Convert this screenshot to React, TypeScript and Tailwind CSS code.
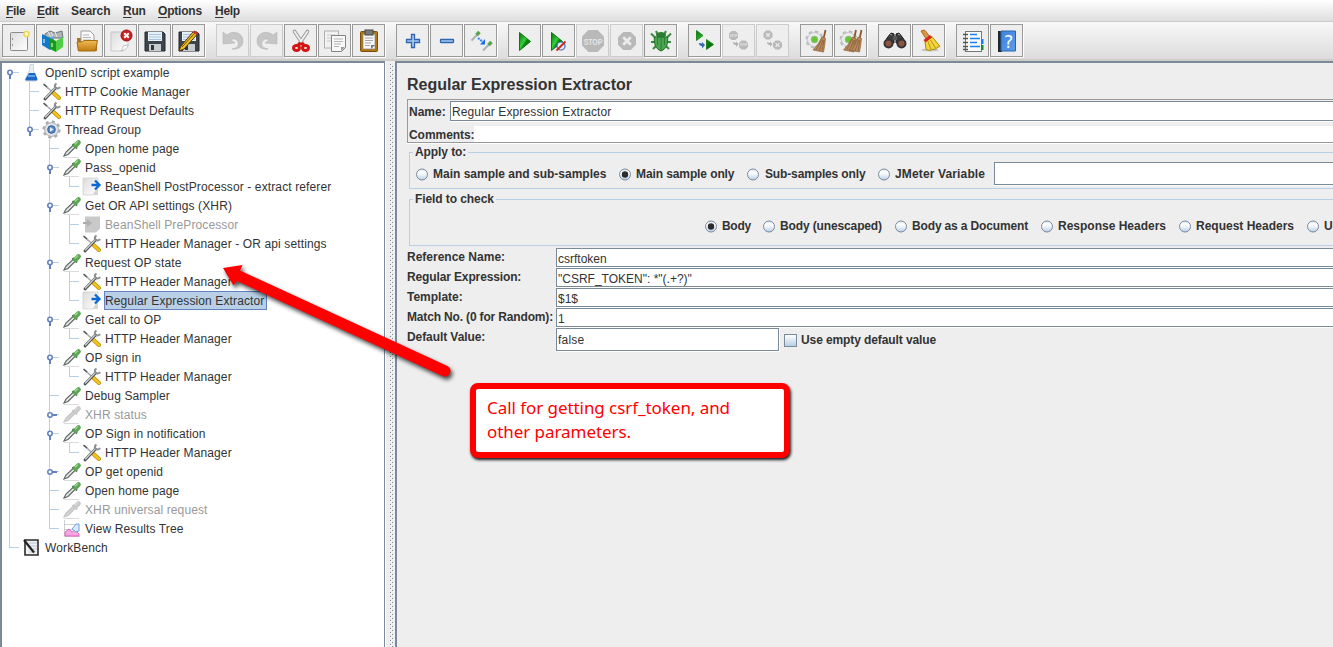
import React from "react";

type P = { children?: React.ReactNode };

const Svg = ({ children }: P) => (
  <svg width="24" height="24" viewBox="0 0 24 24" className="shrink-0">{children}</svg>
);

const Defs = () => (
  <svg width="0" height="0" className="absolute">
    <defs>
      <linearGradient id="play" x1="0" y1="0" x2="1" y2="1">
        <stop offset="0" stopColor="#0b6b0b" /><stop offset=".45" stopColor="#35d23a" /><stop offset=".55" stopColor="#0c8a10" /><stop offset="1" stopColor="#065c08" />
      </linearGradient>
      <linearGradient id="paper" x1="0" y1="0" x2="1" y2="1">
        <stop offset="0" stopColor="#dcdcdc" /><stop offset="1" stopColor="#ffffff" />
      </linearGradient>
      <linearGradient id="gold" x1="0" y1="0" x2="0" y2="1">
        <stop offset="0" stopColor="#f0bd55" /><stop offset="1" stopColor="#c07a10" />
      </linearGradient>
      <linearGradient id="radio" x1="0" y1="0" x2="0" y2="1">
        <stop offset="0" stopColor="#dfe9f3" /><stop offset=".35" stopColor="#ffffff" /><stop offset="1" stopColor="#b8cfe5" />
      </linearGradient>
      <linearGradient id="book" x1="0" y1="0" x2="1" y2="1">
        <stop offset="0" stopColor="#3f83dc" /><stop offset="1" stopColor="#5d9cec" />
      </linearGradient>
      <pattern id="grip" width="4" height="4" patternUnits="userSpaceOnUse">
        <path d="M0 0h1v1h-1zM2 2h1v1h-1z" fill="#7a8a99" />
        <path d="M1 1h1v1h-1zM3 3h1v1h-1z" fill="#ffffff" />
      </pattern>
    </defs>
  </svg>
);

const Floppy = () => (
  <>
    <path d="M2 3h18l2 2v17H2z" fill="#3d444b" stroke="#22272c" />
    <rect x="5" y="3" width="14" height="9" fill="#e9f1f8" />
    <path d="M6 5.5h12M6 8h12M6 10.5h12" stroke="#a9c4dc" strokeWidth="1" />
    <rect x="6" y="15" width="12" height="7" fill="#c9ccce" />
    <rect x="8" y="16" width="3" height="5" fill="#2f353a" />
  </>
);
const Gear = () => (
  <>
    <circle cx="9.500" cy="10.500" r="7.500" fill="none" stroke="#b9bcbd" strokeWidth="3" strokeDasharray="3.400 2.490" />
    <circle cx="9.500" cy="10.500" r="7" fill="#eceeee" stroke="#c3c6c7" />
    <circle cx="9.500" cy="10.500" r="3.400" fill="#64c832" stroke="#a9b5a9" />
  </>
);
const Broom = () => (
  <>
    <path d="M20.500 1l-2 9" stroke="#8a5a2c" strokeWidth="1.800" />
    <path d="M17 8l3.500 1.500-1 8L18.500 23 8 21l5-6z" fill="#b98a5e" stroke="#8d6238" strokeWidth=".7" />
    <path d="M17 10l-6 11M18 11l-4 11M19 11l-2 11" stroke="#7a5430" strokeWidth=".6" />
  </>
);
const Stop = ({ x, y, r, label }: { x: number; y: number; r: number; label: string }) => {
  const k = r * 0.42;
  return (
    <>
      <path d={`M${x - k} ${y - r}H${x + k}L${x + r} ${y - k}V${y + k}L${x + k} ${y + r}H${x - k}L${x - r} ${y + k}V${y - k}z`} fill="#b9b9b9" />
      {label === "STOP" ? (
        <text x={x} y={y + r * 0.32} textAnchor="middle" fontSize={r * 0.85} textLength={r * 1.7} lengthAdjust="spacingAndGlyphs" fontWeight="bold" fontFamily="Liberation Sans, sans-serif" fill="#e6e6e6">STOP</text>
      ) : (
        <path d={`M${x - k} ${y - k}l${2 * k} ${2 * k}m0 ${-2 * k}l${-2 * k} ${2 * k}`} stroke="#ececec" strokeWidth={r * 0.3} />
      )}
    </>
  );
};

const I: Record<string, React.ReactNode> = {
  new: <><rect x="3.500" y="3.500" width="17" height="18" rx="1" fill="url(#paper)" stroke="#8b8b8b" /><path d="M5.500 9v2M5.500 15v2" stroke="#999" /><circle cx="19.500" cy="5" r="2.500" fill="#fffbd0" stroke="#ecd75c" strokeWidth="1.600" /></>,
  templates: <>
    <path d="M4 5l5-3 5 2 7-2 1 7H4z" fill="#aeb4b8" stroke="#6d757b" /><path d="M7 3l3 5M14 3l2 5M10 3l2 4" stroke="#e8e8e8" />
    <path d="M1 5l8 4v12l-8-5z" fill="#1577c8" /><path d="M9 9l4-2v12l-4 2z" fill="#4eaef0" />
    <path d="M9 9l6 3v11l-6-3z" fill="#189a1d" /><path d="M15 12l7-4v10l-7 5z" fill="#4fd044" /><path d="M3 10v4M11 14v4" stroke="#fff" /></>,
  open: <><path d="M2 9h6l1 3H22v10H3z" fill="#a8741c" /><path d="M6 2h9l4 4v9H6z" fill="#fafafa" stroke="#9a9a9a" /><path d="M8 6h6M8 8.500h8M8 11h8" stroke="#b5b5b5" /><path d="M2 13h5l2-1.500H22.500l-2 10.500H3.500z" fill="url(#gold)" stroke="#a76d12" /></>,
  close: <><path d="M2 3h17v14l-5 5H2z" fill="url(#paper)" stroke="#c9c9c9" /><path d="M12 22c2-2 2-4 2-5l5-1c0 2-2 5-7 6z" fill="#fff" stroke="#aaa" strokeWidth=".7" /><circle cx="17.500" cy="6.500" r="5.500" fill="#cf1f1f" stroke="#8f0f0f" /><path d="M15.200 4.200l4.600 4.600m0-4.600l-4.600 4.600" stroke="#fff" strokeWidth="2" /></>,
  save: <Floppy />,
  saveas: <><Floppy /><path d="M2 22l2-5L16 3l4 2.500L7 20z" fill="#f1bd24" stroke="#4a3710" /><path d="M15.500 3.500l2-2 4 2.500-1.500 2z" fill="#c33" /><path d="M5 18L17.500 4.500" stroke="#6d5310" /></>,
  undo: <path d="M2 3l4 3C11 1 22 3 22 12c0 5-4 9-11 8 5-1 7-3 6-7-1-3-5-4-7-2l4 3-12 1z" fill="#c6c6c6" stroke="#b7b7b7" strokeWidth=".6" />,
  redo: <path d="M22 3l-4 3C13 1 2 3 2 12c0 5 4 9 11 8-5-1-7-3-6-7 1-3 5-4 7-2l-4 3 12 1z" fill="#c6c6c6" stroke="#b7b7b7" strokeWidth=".6" />,
  cut: <><path d="M5.500 2.500l8 12M18.500 2.500l-8 12" stroke="#8c8f90" strokeWidth="3.600" strokeLinecap="round" /><path d="M5.500 2.500l8 12M18.500 2.500l-8 12" stroke="#eeefef" strokeWidth="2" strokeLinecap="round" /><path d="M12 14l4 3M12 14l-4 3" stroke="#d41313" strokeWidth="3.400" /><ellipse cx="7.500" cy="19" rx="3" ry="2.600" fill="none" stroke="#d41313" strokeWidth="3" /><ellipse cx="16.500" cy="19" rx="3" ry="2.600" fill="none" stroke="#d41313" strokeWidth="3" /></>,
  copy: <><rect x="1.500" y="2" width="14" height="17" fill="#f1f1f1" stroke="#b0b0b0" /><path d="M4 6h8M4 9h8M4 12h8" stroke="#c9c9c9" /><path d="M8.500 6.500h14v12l-4 4h-10z" fill="#f8f8f8" stroke="#838383" /><path d="M11 10h9M11 12.500h9M11 15h7M11 17.500h5" stroke="#b5b5b5" /><path d="M18 22v-4h4z" fill="#999" /></>,
  paste: <><rect x="3.500" y="2.500" width="17" height="20" rx="1" fill="#b5750e" stroke="#7c4f09" /><path d="M6 5h12v15H6z" fill="#f7f7f7" stroke="#888" strokeWidth=".7" /><rect x="8" y="1" width="8" height="5" fill="#777b77" stroke="#444" /><path d="M8 9h8M8 11.500h8M8 14h6M8 16.500h5" stroke="#a9a9a9" /><path d="M14 20v-4h4z" fill="#777" /></>,
  plus: <path d="M10.500 5.500h3v5h5v3h-5v5h-3v-5h-5v-3h5z" fill="#a9c9ef" stroke="#2f66b2" strokeWidth="1.300" />,
  minus: <rect x="5.500" y="10.500" width="13" height="3" rx=".5" fill="#a9c9ef" stroke="#2f66b2" strokeWidth="1.300" />,
  toggle: <><path d="M2.500 11.500l6-6" stroke="#a9b2ad" strokeWidth="2" /><path d="M7.500 6l3-3" stroke="#5aa54c" strokeWidth="3.600" /><path d="M14 21.500l6-6" stroke="#a9b2ad" strokeWidth="2" /><path d="M19.500 16l3-3" stroke="#5aa54c" strokeWidth="3.600" /><path d="M9 9l5 4" stroke="#2b86f5" strokeWidth="2" strokeDasharray="2 1" /><path d="M11 15.500h5v-5.500z" fill="#176ee0" /></>,
  play: <path d="M6.500 3.500v18l11-9z" fill="url(#play)" stroke="#0a780e" />,
  playnp: <><path d="M4.500 3.500v18l11-9z" fill="url(#play)" stroke="#0a780e" /><circle cx="14" cy="17" r="4" fill="#e8f0fa" stroke="#3b6db5" strokeWidth="1.200" /><path d="M9.500 21.500l9-9" stroke="#d12222" strokeWidth="1.800" /></>,
  stop: <Stop x={12} y={12} r={11} label="STOP" />,
  shut: <Stop x={12} y={12} r={9} label="x" />,
  bug: <><path d="M7 2l2 4M17 2l-2 4M2 4.500l5 5M22 4.500l-5 5M2 13h5M22 13h-5M4 20l4-4M20 20l-4-4" stroke="#3a8a3e" strokeWidth="2" /><ellipse cx="12" cy="6" rx="5" ry="3" fill="#2c7d32" /><path d="M5.500 8h13c1 6-1 12-6.500 14-5.500-2-7.500-8-6.500-14z" fill="#49a550" stroke="#236b2a" /><path d="M12 8v14M8.500 9v7M15.500 9v7" stroke="#2f7f36" /></>,
  rstart: <><path d="M3.500 1.500v10l6.500-5zM13.500 10.500v10l7-5z" fill="url(#play)" stroke="#0a780e" strokeWidth=".8" /><path d="M6 14c0 2 1 3 3 3v2.500l3-3.500-3-3v1.500z" fill="#3666b5" /></>,
  rstop: <><Stop x={6.500} y={6.500} r={4.500} label="STOP" /><Stop x={16.500} y={16} r={4.500} label="STOP" /><path d="M6 13c0 2 1 3 3 3v2l2.500-3-2.500-2.500v1.500z" fill="#b0b0b0" /></>,
  rshut: <><Stop x={7} y={6} r={4.500} label="x" /><Stop x={16.500} y={16} r={4.500} label="x" /><path d="M6 13c0 2 1 3 3 3v2l2.500-3-2.500-2.500v1.500z" fill="#b0b0b0" /></>,
  clear: <><Gear /><Broom /></>,
  clearall: <><Gear /><g transform="translate(-3.500 0)"><Broom /></g><g transform="translate(2 0)"><Broom /></g></>,
  find: <><path d="M4 9l4-5 3 1v9H2zM20 9l-4-5-3 1v9h9z" fill="#3c3c3c" stroke="#1d1d1d" /><rect x="10" y="7" width="4" height="4" fill="#555" /><circle cx="5.500" cy="14.500" r="4" fill="#8a5640" stroke="#333" strokeWidth="2" /><circle cx="18.500" cy="14.500" r="4" fill="#8a5640" stroke="#333" strokeWidth="2" /><path d="M7 5l2 1M15 5l2 1" stroke="#aaa" /></>,
  reset: <><ellipse cx="13" cy="21" rx="9" ry="1.500" fill="#c4c4c4" /><path d="M4 2l3-1 1.500 1L13 8l-3.500 2.500z" fill="#d99a45" stroke="#a86a20" /><path d="M8 12.500l7-5 8 10-3 1-1 1.500-4 .5-2 1-4-1z" fill="#f3d43b" stroke="#ae8d0d" /><path d="M11 12.500l3 8M13.500 11l5 8" stroke="#b4951c" /><path d="M6.500 11l6.500-5 2 2.500-6.500 5z" fill="#d5271c" /></>,
  func: <><rect x="4.500" y="2.500" width="16" height="20" fill="#fafafa" stroke="#777" /><path d="M9 5.500h7M9 9.500h10M9 13.500h7M9 17.500h10" stroke="#1681f3" strokeWidth="1.500" /><path d="M2 5.500h5M2 9.500h5M2 13.500h5M2 17.500h5M2 20.500h5" stroke="#555" strokeWidth="1.500" /><rect x="20" y="10" width="2.500" height="5" fill="#1681f3" /><rect x="20" y="16" width="2.500" height="5" fill="#189022" /></>,
  help: <><path d="M3 2h4v21H3z" fill="#23282f" /><path d="M6 2h14.500v20H6z" fill="url(#book)" stroke="#2b62ad" /><text x="13.500" y="18.500" textAnchor="middle" fontSize="18" fontFamily="DejaVu Sans Mono, monospace" fill="#f4f8ff">?</text></>,
};

const groups: { k: string; off?: boolean }[][] = [
  [{ k: "new" }, { k: "templates" }, { k: "open" }, { k: "close" }, { k: "save" }, { k: "saveas" }],
  [{ k: "undo", off: true }, { k: "redo", off: true }, { k: "cut" }, { k: "copy" }, { k: "paste" }],
  [{ k: "plus" }, { k: "minus" }, { k: "toggle" }],
  [{ k: "play" }, { k: "playnp" }, { k: "stop", off: true }, { k: "shut", off: true }, { k: "bug" }],
  [{ k: "rstart" }, { k: "rstop", off: true }, { k: "rshut", off: true }],
  [{ k: "clear" }, { k: "clearall" }],
  [{ k: "find" }, { k: "reset" }],
  [{ k: "func" }, { k: "help" }],
];

const Toolbar = () => (
  <div className="flex h-[37px] gap-[11px] bg-linear-to-b from-[#f8f8f8] to-[#dcdcdc] pt-[2px] pl-[2px]">
    {groups.map((g, i) => (
      <div key={i} className="flex gap-px">
        {g.map((b) => (
          <div key={b.k} className={b.off
            ? "flex h-[33px] w-[33px] items-center justify-center border border-[#cccccc] bg-[#eeeeee]"
            : "flex h-[33px] w-[33px] items-center justify-center border border-[#999999] bg-[#eeeeee] shadow-[1px_1px_0_#ffffff]"}>
            <Svg>{I[b.k]}</Svg>
          </div>
        ))}
      </div>
    ))}
  </div>
);

const menus = [
  ["File", "w-[31px] tracking-[-0.3px]"], ["Edit", "w-[34px] tracking-[-0.3px]"], ["Search", "w-[52px] tracking-[-0.1px]"],
  ["Run", "w-[35px] tracking-[-0.2px]"], ["Options", "w-[57px] tracking-[-0.2px]"], ["Help", "w-[30px] tracking-[-0.3px]"],
];
const MenuBar = () => (
  <div className="flex h-[22px] border-b border-[#cccccc] bg-linear-to-b from-white to-[#dedede] pl-[6px] text-[12px] leading-[22px] font-bold">
    {menus.map(([m, c]) => (
      <div key={m} className={c}>
        {m === "Search" ? m : <><span className="underline underline-offset-2">{m[0]}</span>{m.slice(1)}</>}
      </div>
    ))}
  </div>
);

type Row = { d: number; icon: string; t: string; h?: "open" | "closed"; off?: boolean; sel?: boolean };
const HM = "HTTP Header Manager";
const rows: Row[] = [
  { d: 0, icon: "flask", t: "OpenID script example", h: "open" },
  { d: 1, icon: "tools", t: "HTTP Cookie Manager" },
  { d: 1, icon: "tools", t: "HTTP Request Defaults" },
  { d: 1, icon: "gear", t: "Thread Group", h: "open" },
  { d: 2, icon: "pipette", t: "Open home page" },
  { d: 2, icon: "pipette", t: "Pass_openid", h: "open" },
  { d: 3, icon: "post", t: "BeanShell PostProcessor - extract referer" },
  { d: 2, icon: "pipette", t: "Get OR API settings (XHR)", h: "open" },
  { d: 3, icon: "pre", t: "BeanShell PreProcessor", off: true },
  { d: 3, icon: "tools", t: "HTTP Header Manager - OR api settings" },
  { d: 2, icon: "pipette", t: "Request OP state", h: "open" },
  { d: 3, icon: "tools", t: HM },
  { d: 3, icon: "post", t: "Regular Expression Extractor", sel: true },
  { d: 2, icon: "pipette", t: "Get call to OP", h: "open" },
  { d: 3, icon: "tools", t: HM },
  { d: 2, icon: "pipette", t: "OP sign in", h: "open" },
  { d: 3, icon: "tools", t: HM },
  { d: 2, icon: "pipette", t: "Debug Sampler" },
  { d: 2, icon: "pipette", t: "XHR status", h: "closed", off: true },
  { d: 2, icon: "pipette", t: "OP Sign in notification", h: "open" },
  { d: 3, icon: "tools", t: HM },
  { d: 2, icon: "pipette", t: "OP get openid", h: "closed" },
  { d: 2, icon: "pipette", t: "Open home page" },
  { d: 2, icon: "pipette", t: "XHR universal request", off: true },
  { d: 2, icon: "chart", t: "View Results Tree" },
  { d: 0, icon: "bench", t: "WorkBench" },
];
const continues = (i: number, k: number) => {
  for (let j = i + 1; j < rows.length; j++) {
    if (rows[j].d < k) return false;
    if (rows[j].d === k) return true;
  }
  return false;
};

const TreeIcon = ({ k, off }: { k: string; off?: boolean }) => (
  <svg width="20" height="19" viewBox="0 0 20 19" className="shrink-0">
    {k === "flask" && <><path d="M8 1.500h3.500v6l3.500 9q0 1.500-1.500 1.500h-9q-1.500 0-1.500-1.500l4.500-9z" fill="#e8eef3" stroke="#c3cad0" strokeWidth=".8" /><path d="M7 10h6l2.500 6q0 1.500-1.500 1.500h-9.500q-1.500 0-1-1.500z" fill="#1d66c4" /><path d="M6 13h7" stroke="#5ea2ee" strokeWidth="2" /></>}
    {k === "tools" && <><path d="M2 2.500l9 8" stroke="#a5a9ab" strokeWidth="1.600" /><path d="M1.500 2l3.500 3" stroke="#55595b" strokeWidth="1.500" /><path d="M11.500 11l5.500 5" stroke="#b88a00" strokeWidth="4" strokeLinecap="round" /><path d="M11.500 11l5.500 5" stroke="#f2c41b" strokeWidth="2.600" strokeLinecap="round" /><path d="M3 17L13.500 6" stroke="#4b5053" strokeWidth="2.800" strokeLinecap="round" /><path d="M3.500 16L13.500 5.500" stroke="#cfd3d4" strokeWidth="1.200" strokeLinecap="round" /><path d="M14.500 1.500q-2.500 1.500-1.200 4 2 2 5-.3" fill="none" stroke="#8b9092" strokeWidth="2" /></>}
    {k === "gear" && <><circle cx="9.500" cy="9.500" r="7.800" fill="none" stroke="#a3a9ac" strokeWidth="2.600" strokeDasharray="3 3.126" /><circle cx="9.500" cy="9.500" r="6.900" fill="#e1e4e6" stroke="#a8aeb1" /><circle cx="9.500" cy="9.500" r="3.800" fill="#5e8cc6" stroke="#2d5a96" /><path d="M8 7.200v4.600l3.600-2.300z" fill="#e6f0fb" /></>}
    {k === "pipette" && <><path d="M2 18.500h15" stroke="#dcdcdc" /><path d="M2 17l2-4L11.500 6l2 2L6 15.500z" fill={off ? "#d2d2d2" : "#e4e9e8"} stroke={off ? "#c4c4c4" : "#5f6666"} strokeWidth="1.200" /><path d="M10.500 5l4.500 4.500" stroke={off ? "#c4c4c4" : "#3f7a3d"} strokeWidth="2" /><path d="M13.500 6.500L16.500 3.500" stroke={off ? "#c9c9c9" : "#5da653"} strokeWidth="4.600" strokeLinecap="round" /><path d="M13 5.500L16 2.500" stroke={off ? "#dadada" : "#9ed394"} strokeWidth="1.200" /></>}
    {k === "post" && <><path d="M1 1h15v10l-5 7H1z" fill="url(#paper)" stroke="#c8c8c8" strokeWidth=".6" /><path d="M11 18c1-3 2-4 5-6v6z" fill="#d5d5d5" /><path d="M9.500 8h7M13 3.500l4.500 4.500-4.500 4.500" fill="none" stroke="#0868d8" strokeWidth="2.300" /></>}
    {k === "pre" && <><path d="M3 1.500h15v12l-4 4H3z" fill="#c9c9c9" /><path d="M1 8h6" stroke="#aaa" strokeWidth="2" /><path d="M5 4l5 4-5 4z" fill="#b0b0b0" /></>}
    {k === "chart" && <><path d="M2.500 1v16.500H18M2 5.500h15M2 10.500h15" stroke="#bbbbbb" strokeWidth=".7" fill="none" /><path d="M3 17v-4l4-3 3 3 3-2 4 4v2z" fill="#f5a8e0" stroke="#d93bbb" strokeWidth=".7" /><path d="M10 10l4-5 3 0v7l-3 1z" fill="#dbe9fb" stroke="#6f9fe0" /></>}
    {k === "bench" && <><path d="M3 2h13v15H3z" fill="#eef1f4" stroke="#2b2b2b" strokeWidth="1.600" /><path d="M7 5h8M7 8h8M7 11h8M7 14h7" stroke="#b3bccb" strokeWidth=".8" /><path d="M2 2l10 12.500" stroke="#222" strokeWidth="2.200" /></>}
  </svg>
);

const Guide = ({ i, k }: { i: number; k: number }) => {
  const r = rows[i];
  const own = r.d === k;
  const down = continues(i, k);
  return (
    <svg width="20" height="19" viewBox="0 0 20 19" className="shrink-0">
      {own && i > 0 && <path d="M7.500 0V10" stroke="#b8cfe5" />}
      {own && <path d="M7 9.500H17" stroke="#b8cfe5" />}
      {down && <path d={own ? "M7.500 9V19" : "M7.500 0V19"} stroke="#b8cfe5" />}
      {own && r.h === "open" && <><path d="M8 11v5" stroke="#6382bf" strokeWidth="2" /><circle cx="8" cy="9.500" r="2.200" fill="#fff" stroke="#6382bf" strokeWidth="1.600" /></>}
      {own && r.h === "closed" && <><path d="M10 10h5" stroke="#6382bf" strokeWidth="2" /><circle cx="8" cy="10" r="2.200" fill="#fff" stroke="#6382bf" strokeWidth="1.600" /></>}
    </svg>
  );
};

const Tree = () => (
  <div className="w-[385px] shrink-0 border-t-2 border-r border-l-2 border-[#7a8a99] bg-white text-[12px] leading-[18px] tracking-[0.12px]">
    {rows.map((r, i) => (
      <div key={i} className="flex h-[19px]">
        {Array.from({ length: r.d + 1 }, (_, k) => <Guide key={k} i={i} k={k} />)}
        <TreeIcon k={r.icon} off={r.off} />
        <div className="pl-[2px]">
          <div className={r.sel
            ? "h-[19px] border border-[#6382bf] bg-[#b8cfe5] pr-[2px] whitespace-nowrap"
            : r.off
              ? "h-[19px] border border-transparent whitespace-nowrap text-[#999999]"
              : "h-[19px] border border-transparent whitespace-nowrap"}>{r.t}</div>
        </div>
      </div>
    ))}
  </div>
);

const Radio = ({ on, children, w }: { on?: boolean; children: React.ReactNode; w: string }) => (
  <div className={`flex h-[13px] shrink-0 items-center gap-[4px] leading-[13px] whitespace-nowrap ${w}`}>
    <svg width="13" height="13" viewBox="0 0 13 13" className="shrink-0">
      <circle cx="6" cy="6.500" r="5.500" fill="url(#radio)" stroke="#7a8a99" />
      {on && <circle cx="6" cy="6.500" r="3.200" fill="#2b2b2b" />}
    </svg>
    <span>{children}</span>
  </div>
);

const Group = ({ title, children, c }: { title: string; children: React.ReactNode; c: string }) => (
  <fieldset className={`ml-[2px] min-w-0 overflow-hidden border border-r-0 border-[#b8cfe5] ${c}`}>
    <legend className="ml-[3px] h-[13px] px-[2px] leading-[13px] tracking-[-0.08px]">{title}</legend>
    {children}
  </fieldset>
);

const Field = ({ label, value, c }: { label: string; value: string; c: string }) => (
  <div className="flex h-[20px]">
    <div className={`w-[149px] shrink-0 leading-[18px] whitespace-nowrap ${c}`}>{label}</div>
    <div className="h-[19px] flex-1 border border-r-0 border-[#7a8a99] bg-white pl-px leading-[20px] font-normal shadow-[0_1px_0_#ffffff]">{value}</div>
  </div>
);

const Panel = () => (
  <div className="flex min-w-0 flex-1 flex-col overflow-hidden border-t-2 border-l-2 border-[#7a8a99] pl-[10px] text-[12px] font-bold">
    <h1 className="mt-[10px] h-[26px] text-[16px] leading-[23px]">Regular Expression Extractor</h1>
    <div className="h-[44px] border border-r-0 border-[#999999] shadow-[0_1px_0_#ffffff]">
      <div className="flex h-[26px] pt-px">
        <div className="w-[42px] pl-px leading-[23px]">Name:</div>
        <div className="h-[20px] flex-1 border border-r-0 border-[#7a8a99] bg-white pl-px leading-[20px] font-normal tracking-[0.12px] shadow-[0_1px_0_#ffffff]">Regular Expression Extractor</div>
      </div>
      <div className="flex h-[16px]">
        <div className="w-[66px] pl-px leading-[18px] tracking-[-0.05px]">Comments:</div>
        <div className="flex-1 bg-white" />
      </div>
    </div>
    <div className="h-[3px]" />
    <Group title="Apply to:" c="h-[43px]">
      <div className="flex pt-[3px] pl-[6px]">
        <div className="flex pt-[6px]">
          <Radio w="w-[203px]">Main sample and sub-samples</Radio>
          <Radio w="w-[128px] tracking-[-0.1px]" on>Main sample only</Radio>
          <Radio w="w-[131px] tracking-[-0.14px]"><span className="pl-px">Sub-samples only</span></Radio>
          <Radio w="w-[116px] tracking-[0.14px]">JMeter Variable</Radio>
        </div>
        <div className="h-[23px] flex-1 border border-r-0 border-[#7a8a99] bg-white shadow-[0_1px_0_#ffffff]" />
      </div>
    </Group>
    <div className="h-[4px]" />
    <Group title="Field to check" c="h-[53px]">
      <div className="flex pt-[14px] pl-[295px]">
        <Radio w="w-[58px] tracking-[-0.3px]" on>Body</Radio>
        <Radio w="w-[132px] tracking-[-0.13px]">Body (unescaped)</Radio>
        <Radio w="w-[146px] tracking-[-0.15px]">Body as a Document</Radio>
        <Radio w="w-[138px]">Response Headers</Radio>
        <Radio w="w-[128px]">Request Headers</Radio>
        <Radio w="w-[60px]">URL</Radio>
      </div>
    </Group>
    <div className="h-[2px]" />
    <Field label="Reference Name:" value="csrftoken" c="tracking-normal" />
    <Field label="Regular Expression:" value={'"CSRF_TOKEN": *"(.+?)"'} c="tracking-[-0.13px]" />
    <Field label="Template:" value="$1$" c="tracking-normal" />
    <Field label="Match No. (0 for Random):" value="1" c="tracking-[-0.16px]" />
    <div className="flex h-[24px]">
      <div className="w-[149px] shrink-0 leading-[18px] tracking-[-0.08px]">Default Value:</div>
      <div className="h-[23px] w-[223px] border border-[#7a8a99] bg-white pl-px leading-[23px] font-normal tracking-[0.2px] shadow-[1px_1px_0_#ffffff]">false</div>
      <div className="mt-[6px] ml-[5px] h-[13px] w-[13px] border border-[#7a8a99] bg-linear-to-b from-white to-[#b8cfe5]" />
      <div className="ml-[4px] leading-[25px] tracking-[-0.1px]">Use empty default value</div>
    </div>
  </div>
);

const Annotation = () => (
  <>
    <svg className="absolute top-[250px] left-[210px] drop-shadow-[2px_3px_2px_rgba(0,0,0,0.7)]" width="260" height="140" viewBox="210 250 260 140">
      <path d="M223 268L242.500 265L240 270.500L447.500 366Q452 368.500 450 373Q448 377.500 443 376.200L237 281L233.500 285.500z" fill="#ff0000" />
    </svg>
    <div className="absolute top-[383px] left-[470px] h-[75px] w-[320px] rounded-[8px] border-[6px] border-[#ff0000] bg-white pt-[7px] pl-[11px] font-['Noto_Sans',sans-serif] text-[17px] leading-[24px] tracking-[-0.06px] text-[#ff0000] shadow-[1px_2px_3px_rgba(0,0,0,0.9)]">
      <div className="whitespace-nowrap">Call for getting csrf_token, and</div>
      <div className="whitespace-nowrap">other parameters.</div>
    </div>
  </>
);

export default function App() {
  return (
    <div className="relative flex h-[647px] w-[1333px] flex-col overflow-hidden bg-[#eeeeee] font-['Liberation_Sans',Arial,sans-serif] text-[#333333]">
      <Defs />
      <MenuBar />
      <Toolbar />
      <div className="h-[2px] shrink-0 bg-[#cfcdc9]" />
      <div className="flex min-h-0 flex-1">
        <Tree />
        <div className="w-[10px] shrink-0 overflow-hidden border-l border-white pt-[3px] pl-[4px]">
          <svg width="4" height="584" shapeRendering="crispEdges"><rect width="4" height="584" fill="url(#grip)" /></svg>
        </div>
        <Panel />
      </div>
      <Annotation />
    </div>
  );
}
